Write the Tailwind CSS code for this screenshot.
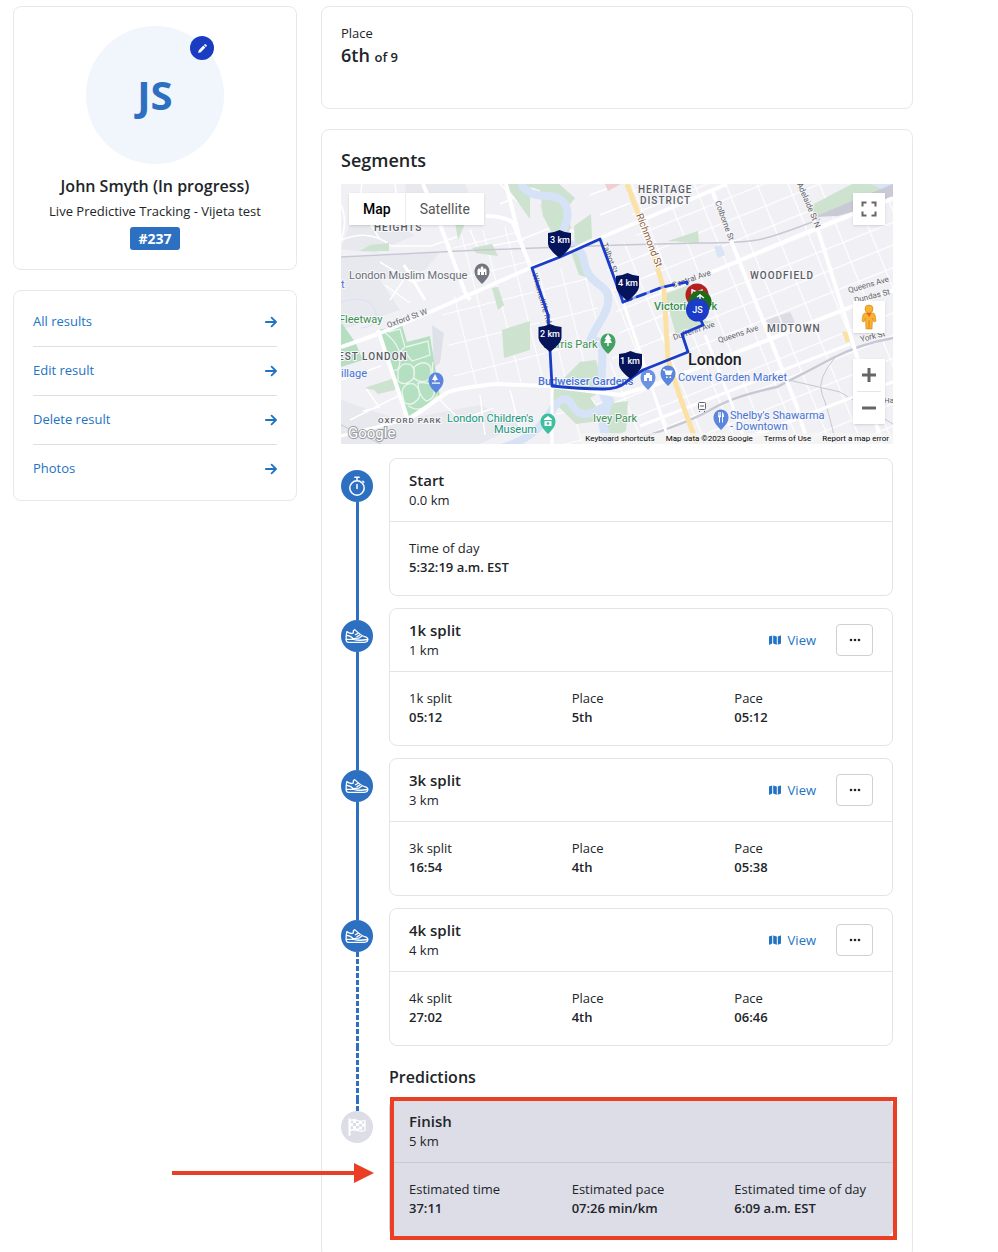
<!DOCTYPE html>
<html lang="en">
<head>
    <meta charset="UTF-8">
    <meta name="viewport" content="width=device-width, initial-scale=1.0">
    <title>John Smyth - Live Predictive Tracking</title>
    <script src="https://cdn.jsdelivr.net/npm/@tailwindcss/browser@4"></script>
</head>
<body class="bg-white font-['Open_Sans',sans-serif] text-[13px] text-[#212529]">

<!-- Shared icons -->
<svg class="hidden" aria-hidden="true">
    <symbol id="icon-arrow" viewBox="0 0 12 12">
        <path d="M0.8 6h10M6.600 1.600 11 6l-4.400 4.400" fill="none" stroke="currentColor" stroke-width="1.800" stroke-linecap="round" stroke-linejoin="round"/>
    </symbol>
    <symbol id="icon-map" viewBox="0 0 12 10">
        <path d="M0 2Q0 1.500.5 1.300L3.200.4v8.200L.5 9.700Q0 9.900 0 9.400zM4.200.4 7.800 1.500v8.200L4.200 8.600zM8.800 1.500 11.500.4q.5-.2.5.4v7.400q0 .4-.4.600L8.800 9.700z" fill="currentColor"/>
    </symbol>
    <symbol id="icon-shoe" viewBox="0 0 24 16">
        <g fill="none" stroke="currentColor" stroke-width="1.300" stroke-linecap="round" stroke-linejoin="round">
            <path d="M1.800 3.600C1.200 6.500 1 9.800 1.200 12c.1 1.600.9 2.300 2.400 2.300h15.800c2 0 3.400-1.200 3.400-3.200 0-1.600-1.400-2-3.200-2.500C16.400 7.800 13.400 5 9.600 1.600L8.400 2.800l-.2 2.400c-2 .6-4.400.2-6.400-1.600z"/>
            <path d="M1.300 11.400h7.500c3 1 8.800 1 13.800.1M1.600 7.400c3 .2 5 1.400 7 3.600M8.800 10.600l3.600-.4M10.400 6.800l2.600-1.400M12 8.600l2.800-1.600M13.600 10.200l3-2"/>
        </g>
    </symbol>
    <symbol id="icon-dots" viewBox="0 0 12 4">
        <g fill="currentColor"><circle cx="2" cy="2" r="1.300"/><circle cx="6" cy="2" r="1.300"/><circle cx="10" cy="2" r="1.300"/></g>
    </symbol>
</svg>

<div class="h-screen overflow-hidden">
<div class="grid max-w-[913px] grid-cols-[284px_minmax(0,1fr)] items-start gap-6 pt-[6px] pl-[13px]">

    <!-- Sidebar -->
    <aside class="flex flex-col gap-5">
        <section class="flex flex-col items-center rounded-lg border border-[#e8e8ea] px-5 py-[19px]">
            <div class="relative flex size-[138px] items-center justify-center rounded-full bg-[#f0f6fb]">
                <span class="text-[40px] leading-[40px] font-bold text-[#2d6fc1]">JS</span>
                <button type="button" aria-label="Edit photo" class="absolute top-[10px] right-[10px] flex size-6 items-center justify-center rounded-full bg-[#1a3cc0] text-white">
                    <svg class="size-[11px]" viewBox="0 0 11 11" fill="currentColor"><path d="M7.300 1.600q1.100-.9 2.100.1.900.9 0 1.900l-.5.5-2-2zM6.300 2.600l2.100 2L3.800 9.200 1.100 10 1.800 7.200z"/></svg>
                </button>
            </div>
            <h1 class="mt-[10px] text-base leading-6 font-semibold">John Smyth (In progress)</h1>
            <p class="mt-[3px] leading-5">Live Predictive Tracking - Vijeta test</p>
            <span class="mt-[6px] rounded-[3px] bg-[#2d6fc1] px-2 text-sm leading-[23px] font-bold text-white">#237</span>
        </section>

        <nav class="rounded-lg border border-[#e8e8ea] px-[19px] py-[7px] text-[#2273c3]">
            <a href="#" class="flex h-[49px] items-center justify-between border-b border-[#dddee6]">All results <svg class="size-3"><use href="#icon-arrow"/></svg></a>
            <a href="#" class="flex h-[49px] items-center justify-between border-b border-[#dddee6]">Edit result <svg class="size-3"><use href="#icon-arrow"/></svg></a>
            <a href="#" class="flex h-[49px] items-center justify-between border-b border-[#dddee6]">Delete result <svg class="size-3"><use href="#icon-arrow"/></svg></a>
            <a href="#" class="flex h-12 items-center justify-between">Photos <svg class="size-3"><use href="#icon-arrow"/></svg></a>
        </nav>
    </aside>

    <main class="flex flex-col gap-5">
        <section class="rounded-lg border border-[#e8e8ea] px-[19px] pt-4 pb-[39px]">
            <p class="leading-5">Place</p>
            <p class="text-lg leading-6 font-semibold">6th <span class="text-[13px]">of 9</span></p>
        </section>

        <section class="rounded-lg border border-[#e8e8ea] px-[19px] pt-5 pb-5">
            <h2 class="mb-[14px] text-lg leading-5 font-semibold">Segments</h2>

            <!-- Map -->
            <div class="relative mb-[14px] h-[260px] overflow-hidden font-[Roboto,sans-serif]">
                <svg class="h-full w-full" viewBox="341 184 552 260" preserveAspectRatio="xMidYMid slice" role="img" aria-label="Course map">
                    <defs>
                        <pattern id="blocks-east" width="29" height="21" patternUnits="userSpaceOnUse" patternTransform="translate(700 277) rotate(-22)">
                            <path d="M0 0h29M0 0v21" stroke="#fff" stroke-width="2.400"/>
                        </pattern>
                        <pattern id="blocks-west" width="22" height="31" patternUnits="userSpaceOnUse" patternTransform="translate(500 300) rotate(-14)">
                            <path d="M0 0h22M0 0v31" stroke="#fff" stroke-width="2"/>
                        </pattern>
                        <path id="pin" d="M0 13C-5 8-7.500 5-7.500 0a7.500 7.500 0 0 1 15 0C7.500 5 5 8 0 13z"/>
                        <path id="shield" d="M-11.500-9Q-5-9.500 0-12 5-9.500 11.500-9V2Q11 7.500 0 16-11 7.500-11.500 2z"/>
                    </defs>
                    <rect x="341" y="184" width="552" height="260" fill="#f0f0f5"/>
                    <!-- shaded districts -->
                    <g fill="#e7e9ee">
                        <path d="M341 258 440 252 425 270 380 280 400 310 341 330z"/>
                        <path d="M341 400 400 420 480 405 520 425 480 444H341z"/>
                        <path d="M405 184h60l12 26-30 12-38-6zM355 210l60 25-40 18-34-4z"/>
                        <path d="M540 205l14-5 5 12-14 7zM432 325l12 8-4 30-6 5z" fill="#dfe1e8"/>
                        <path d="M766 320l24-8 5 10-24 9z" fill="#dcdce4"/>
                    </g>
                    <!-- minor streets -->
                    <path d="M625 184H893V444H690L655 320z" fill="url(#blocks-east)"/>
                    <path d="M603 250 650 235 668 300 690 444H625L600 400 620 330z" fill="url(#blocks-east)"/>
                    <path d="M440 300 530 268 550 384 495 384 455 390z" fill="url(#blocks-west)"/>
                    <path d="M535 274 590 262 600 300 590 345 605 380 552 384z" fill="url(#blocks-west)"/>
                    <path d="M466 290 530 268 512 225 450 236zM555 400h50l20 20-5 24h-60z" fill="url(#blocks-west)"/>
                    <g fill="none" stroke="#fff" stroke-width="1.500">
                        <path d="M341 240q30-12 50 6h40l28-10M362 184l-3 22 20 32M395 184l5 35M341 205q8 18-2 40M380 262l32 20 40-8M390 300l20-30 25 8M385 285l25 18M500 184l20 20M470 230l8 18 46-8M350 420l60-30M365 387l14 20-16 4M440 400l20 20 34-12M480 395l5 40M510 390l10 40M545 184l-45 20M520 240l40-16 14 8M341 380l40-14M600 215l30-12M590 195l40-15"/>
                    </g>
                    <!-- parks -->
                    <g fill="#cde2cf">
                        <path d="M520 184h39l16 14-8 10 4 20-12 18-16-30-3-26z"/>
                        <path d="M505 184h25v35zM574 226l17-12 1 24-17 8zM571 252l14 2 4 24-10-3z"/>
                        <path d="M370 245l-10 6h29v-8zM455 222l6-14 3 18-6 14zM472 248l20-4 6 12-22-3zM492 288l6-1 6 18-6 5zM479 244l16-2z"/>
                        <path d="M812 205l40-21h36l-6 10-60 22-9 4zM668 241l30-10 1 12z"/>
                        <path d="M502 330l28-9v29l-26 8zM364 388l31-10v12l-17 4-4-4zM665 294l24-9 14 35 12 2-38 17z"/>
                        <path d="M554 388l26-26 16-2 8 30-14 8 16 22-30 4-24-24zM600 405l28-4-2 30-22 10zM520 365l8-4z"/>
                    </g>
                    <path d="M341 322 355 342 363 360 341 367zM378 330 402 325 407 342 430 336 440 397 407 417z" fill="#b4dfc1"/>
                    <g fill="none" stroke="#eaf6ec" stroke-width="1.300">
                        <path d="M384 332q16 12 16 26t-6 12M388 332l12-3 5 18q-10 8-6 14M406 347l22-6 2 14-18 6-8-10"/>
                        <path d="M398 371q4-10 13-6 6 6 2 14-8 8-15 2zM414 367q10-8 16-1 3 8-2 14-8 4-14-2zM402 392q2-10 12-8 7 5 5 14-8 10-15 4zM418 383q10-2 16 4 2 12-8 14-8-6-8-18zM408 406q14 8 24-5l6-6M433 362q-2 10 2 22"/>
                    </g>
                    <!-- river -->
                    <g fill="none" stroke="#d6e2f6" stroke-linejoin="round" stroke-linecap="round">
                        <path d="M522 186q8 10 24 10t20 10-2 22 6 16 14 18 17 24-1 36-6 20 8 26 6 32-10 10-26-5-22 8-40 32-30 12" stroke-width="8"/>
                        <path d="M608 400l-5 24 4 20" stroke-width="9"/>
                        <path d="M341 302q28-8 34 8t-14 18" stroke-width="1"/>
                    </g>
                    <path d="M870 184h23v10zM714 247l7-2 4 10-7 3z" fill="#d9e4f7"/>
                    <path d="M605 184h16l-13 7z" fill="#f0cfd2"/>
                    <!-- railways -->
                    <path d="M814 217 893 184V200L838 216z" fill="#c9cad6"/>
                    <g fill="none" stroke="#c7c8d3" stroke-width="1.400">
                        <path d="M341 257 480 250 620 245 700 243Q745 243 762 239T820 219"/>
                        <path d="M640 438Q690 422 712 409T777 387L833 358Q860 344 893 338" stroke-width="2.400"/>
                        <path d="M836 356q-20 24-14 38t14 50M780 378l60 14 53 32" stroke-width="1"/>
                        <path d="M341 425l40 19" stroke-width="1"/>
                    </g>
                    <!-- main roads -->
                    <g fill="none" stroke="#fff" stroke-width="4" stroke-linejoin="round">
                        <path d="M341 347 378 334 430 312 530 268 600 238 727 184"/>
                        <path d="M423 184 441 227 465 292 470 300M486 216Q505 216 513 223L531 268M506 184 520 240 531 268"/>
                        <path d="M378 330 408 420 445 394Q450 389 495 384L550 386 620 395 653 385 710 363 893 290"/>
                        <path d="M552 386V444M341 436 408 419M404 265 425 300M600 238 623 302 648 375 670 444" stroke-width="3"/>
                        <path d="M700 277 817 228 893 198M660 292 700 277"/>
                        <path d="M712 190 732 243 760 313 797 407 808 444M800 184 817 227 843 310 857 357 882 444"/>
                        <path d="M705 335 733 407 746 444M640 426 850 344M740 440 893 382" stroke-width="3"/>
                    </g>
                    <path d="M627 184 653 253 664 290 668 360 680 397 697 444" fill="none" stroke="#fbe2a4" stroke-width="5"/>
                    <path d="M842 332l5-1 3 10-4 2z" fill="#fbe2a4"/>

                    <!-- street names -->
                    <g fill="#5f6368" stroke="#f5f5f8" stroke-width="2" paint-order="stroke" class="text-[8px]">
                        <text transform="translate(388 328) rotate(-20)">Oxford St W</text>
                        <text transform="translate(715 202) rotate(70)">Colborne St</text>
                        <text transform="translate(797 184) rotate(67)">Adelaide St N</text>
                        <text transform="translate(673 288) rotate(-19)">Central Ave</text>
                        <text transform="translate(674 340) rotate(-18)">Dufferin Ave</text>
                        <text transform="translate(719 343) rotate(-18)">Queens Ave</text>
                        <text transform="translate(849 293) rotate(-16)">Queens Ave</text>
                        <text transform="translate(855 303) rotate(-14)">Dundas St</text>
                        <text transform="translate(861 342) rotate(-14)">York St</text>
                        <text x="884" y="403">Ha</text>
                        <text transform="translate(532 274) rotate(74)">Wharncliffe Rd</text>
                        <text transform="translate(602 244) rotate(70)">Talbot St</text>
                    </g>
                    <text transform="translate(636 215) rotate(69)" fill="#8a5a3c" stroke="#fff" stroke-width="2" paint-order="stroke" class="text-[10px]">Richmond St</text>
                    <!-- places -->
                    <g stroke="#f7f7fa" stroke-width="2" paint-order="stroke" class="text-[11px]">
                        <g fill="#5a5e64" class="text-[10px] font-medium tracking-widest">
                            <text x="374" y="231">HEIGHTS</text>
                            <text x="638" y="193">HERITAGE</text>
                            <text x="640" y="204">DISTRICT</text>
                            <text x="750" y="279">WOODFIELD</text>
                            <text x="767" y="332">MIDTOWN</text>
                            <text x="338" y="360">EST LONDON</text>
                            <text x="378" y="423" class="text-[8px]">OXFORD PARK</text>
                        </g>
                        <text x="349" y="279" fill="#6b6f76">London Muslim Mosque</text>
                        <g fill="#3b9150">
                            <text x="339" y="323">Fleetway</text>
                            <text x="543" y="348">Harris Park</text>
                            <text x="593" y="422">Ivey Park</text>
                            <text x="654" y="310" class="font-medium">Victoria Park</text>
                        </g>
                        <g fill="#18977b">
                            <text x="447" y="422">London Children's</text>
                            <text x="494" y="433">Museum</text>
                        </g>
                        <g fill="#4673d2">
                            <text x="341" y="377">illage</text>
                            <text x="341" y="288">t</text>
                            <text x="538" y="385" class="font-medium">Budweiser Gardens</text>
                            <text x="678" y="381">Covent Garden Market</text>
                            <text x="730" y="419">Shelby's Shawarma</text>
                            <text x="730" y="430">- Downtown</text>
                        </g>
                        <text x="688" y="365" fill="#202124" class="text-base font-medium">London</text>
                    </g>
                    <!-- place pins -->
                    <use href="#pin" x="482" y="271" fill="#717680"/>
                    <use href="#pin" x="436" y="380" fill="#5b86dd"/>
                    <use href="#pin" x="608" y="341" fill="#45a163"/>
                    <use href="#pin" x="648" y="377" fill="#6b93e2"/>
                    <use href="#pin" x="668" y="373" fill="#5b86dd"/>
                    <use href="#pin" x="721" y="417" fill="#5b86dd"/>
                    <use href="#pin" x="548" y="421" fill="#3bbf9d"/>
                    <g fill="#fff">
                        <path d="M477.500 275v-5l1.500-2 1.500 2v-2l1.500-2 1.500 2v2l1.500-2 1.500 2v5h-1.500v-3h-1v3h-3v-3h-1v3z"/>
                        <path d="M435 374l3 6h-2.400v1.600h-1.200V380H432zM432 382.500h8v1.200h-8z"/>
                        <path d="M608 334l3.500 5h-1.500l2 4h-3.300v3h-1.400v-3H604l2-4h-1.500z"/>
                        <path d="M644 381v-6h2v-2h4v2h2v6h-3v-3h-2v3z"/>
                        <path d="M663 369h2l.8 1.500h7L671 375h-5.200L664.500 370.500H663zM666 376.500h1.600v1.600H666zM669.500 376.500h1.600v1.600h-1.600z"/>
                        <path d="M718 412v4q0 1.500 1 1.500v5h1v-5q1 0 1-1.500v-4h-.7v3.500h-.5V412h-.6v3.500h-.5V412zM722 412q2 1 2 5h-1v5.500h-1z"/>
                        <path d="M544 419l4-3 4 3v1h-8zM544.500 421h7v5h-7z"/>
                    </g>
                    <circle cx="548" cy="423.500" r="1.300" fill="#3bbf9d"/>
                    <g fill="#fff" stroke="#5f6368"><rect x="698.500" y="402.500" width="7" height="7" rx="1"/><path d="M700 406h4M700 411l-1 1M704 411l1 1"/></g>

                    <!-- course -->
                    <g fill="none" stroke="#1a3cc8" stroke-width="2.800" stroke-linejoin="round" stroke-linecap="round">
                        <path d="M700 318 703 325 682 334 688 352 643 370Q632 377 625 383T603 389Q580 389 552 386L550 350 548 315 532 268 560 257 600 239 623 302"/>
                        <path d="M623 302 663 287" stroke="#8aa9ec"/>
                        <path d="M623 302 663 287 687 282 688 288" stroke-dasharray="9 6"/>
                    </g>
                    <g fill="#06145c">
                        <use href="#shield" x="559.500" y="242"/>
                        <use href="#shield" x="550" y="336"/>
                        <use href="#shield" x="630.500" y="363"/>
                        <use href="#shield" x="627.500" y="285"/>
                    </g>
                    <g fill="#fff" text-anchor="middle" class="text-[9px] font-medium">
                        <text x="560" y="243">3 km</text>
                        <text x="550" y="337">2 km</text>
                        <text x="630" y="364">1 km</text>
                        <text x="628" y="286">4 km</text>
                    </g>
                    <circle cx="697" cy="295" r="11.500" fill="#b3201f"/>
                    <path d="M692 289v8M692 290l5 2 5-2v5l-5 1" stroke="#fff" stroke-width="1.400" fill="none"/>
                    <circle cx="700" cy="302" r="11.500" fill="#1f6b1c"/>
                    <path d="M700 294v5M697 297l3-2 4 3" stroke="#fff" stroke-width="1.400" fill="none"/>
                    <circle cx="697.500" cy="310" r="11.500" fill="#1a3cc8"/>
                    <text x="697.500" y="313" fill="#fff" text-anchor="middle" class="text-[9px] font-medium">JS</text>

                    <text x="348" y="438" fill="#fff" stroke="#9a9ca1" stroke-width="2" paint-order="stroke" class="text-[15px]">Google</text>
                </svg>

                <div class="absolute top-[9px] left-2 flex h-8 bg-white text-sm shadow">
                    <button type="button" class="border-r border-[#ededed] px-[14px] font-medium text-black">Map</button>
                    <button type="button" class="px-[14px] text-[#565656]">Satellite</button>
                </div>
                <button type="button" aria-label="Toggle fullscreen view" class="absolute top-[9px] right-2 flex size-8 items-center justify-center bg-white text-[#666] shadow">
                    <svg class="size-4" viewBox="0 0 16 16" fill="none" stroke="currentColor" stroke-width="2"><path d="M1.500 5.500v-4h4M10.500 1.500h4v4M14.500 10.500v4h-4M5.500 14.500h-4v-4"/></svg>
                </button>
                <button type="button" aria-label="Street View" class="absolute top-[117px] right-2 flex size-8 items-center justify-center bg-white shadow">
                    <svg class="h-[26px] w-4" viewBox="0 0 16 26">
                        <path d="M4.500 9h7q2 0 2.500 2l1 6-2 1-1.500-4-.5 11H5l-.5-11L3 18l-2-1 1-6q.5-2 2.500-2z" fill="#fbb130" stroke="#d98a1c" stroke-width=".7"/>
                        <path d="M5.500 9 8 13l2.500-4z" fill="#e8622c"/>
                        <path d="M8 16v9" stroke="#d98a1c"/>
                        <circle cx="8" cy="5" r="4" fill="#fbb130" stroke="#d98a1c" stroke-width=".7"/>
                    </svg>
                </button>
                <div class="absolute right-2 bottom-[20px] flex w-8 flex-col items-center bg-white text-[#666] shadow">
                    <button type="button" aria-label="Zoom in" class="flex h-8 w-8 items-center justify-center"><svg class="size-[14px]" viewBox="0 0 14 14"><path d="M7 0v14M0 7h14" stroke="currentColor" stroke-width="3"/></svg></button>
                    <span class="h-px w-6 bg-[#e6e6e6]"></span>
                    <button type="button" aria-label="Zoom out" class="flex h-8 w-8 items-center justify-center"><svg class="size-[14px]" viewBox="0 0 14 14"><path d="M0 7h14" stroke="currentColor" stroke-width="3"/></svg></button>
                </div>
                <div class="absolute right-0 bottom-0 flex gap-[11px] bg-[#f5f5f5]/70 px-1 text-[8px] leading-[11px] text-black">
                    <button type="button">Keyboard shortcuts</button>
                    <span>Map data ©2023 Google</span>
                    <a href="#">Terms of Use</a>
                    <a href="#">Report a map error</a>
                </div>
            </div>

            <!-- Timeline -->
            <ol>
                <li class="flex gap-4">
                    <div class="flex w-8 flex-col items-center pt-3">
                        <span class="flex size-8 shrink-0 items-center justify-center rounded-full bg-[#2d6fc1] text-white">
                            <svg class="size-5" viewBox="0 0 20 20" fill="none" stroke="currentColor" stroke-width="1.500" stroke-linecap="round"><circle cx="10" cy="12" r="7.200"/><path d="M10 8.500v4M10 1.500v3M7.800 1.200h4.400M15.800 5.200l1 1"/></svg>
                        </span>
                        <span class="w-[3px] flex-1 bg-[#2d6fc1]"></span>
                    </div>
                    <div class="mb-3 flex-1 rounded-lg border border-[#e3e4e6]">
                        <div class="border-b border-[#e3e4e6] px-[19px] py-[11px] leading-5">
                            <h3 class="text-[15px] leading-5 font-semibold">Start</h3>
                            <p>0.0 km</p>
                        </div>
                        <dl class="grid grid-cols-3 gap-6 px-[19px] pt-[17px] pb-[18px] leading-[19px]">
                            <div><dt>Time of day</dt><dd class="font-semibold">5:32:19 a.m. EST</dd></div>
                        </dl>
                    </div>
                </li>

                <li class="flex gap-4">
                    <div class="flex w-8 flex-col items-center">
                        <span class="h-3 w-[3px] bg-[#2d6fc1]"></span>
                        <span class="flex size-8 shrink-0 items-center justify-center rounded-full bg-[#2d6fc1] text-white"><svg class="h-4 w-6"><use href="#icon-shoe"/></svg></span>
                        <span class="w-[3px] flex-1 bg-[#2d6fc1]"></span>
                    </div>
                    <div class="mb-3 flex-1 rounded-lg border border-[#e3e4e6]">
                        <div class="flex items-center border-b border-[#e3e4e6] px-[19px] py-[11px] leading-5">
                            <div class="flex-1">
                                <h3 class="text-[15px] leading-5 font-semibold">1k split</h3>
                                <p>1 km</p>
                            </div>
                            <a href="#" class="flex items-center gap-[7px] text-[#2273c3]"><svg class="h-[10px] w-3"><use href="#icon-map"/></svg>View</a>
                            <button type="button" aria-label="More options" class="ml-5 flex h-8 w-[37px] items-center justify-center rounded border border-[#ced0d4]"><svg class="h-1 w-3"><use href="#icon-dots"/></svg></button>
                        </div>
                        <dl class="grid grid-cols-3 gap-6 px-[19px] pt-[17px] pb-[18px] leading-[19px]">
                            <div><dt>1k split</dt><dd class="font-semibold">05:12</dd></div>
                            <div><dt>Place</dt><dd class="font-semibold">5th</dd></div>
                            <div><dt>Pace</dt><dd class="font-semibold">05:12</dd></div>
                        </dl>
                    </div>
                </li>

                <li class="flex gap-4">
                    <div class="flex w-8 flex-col items-center">
                        <span class="h-3 w-[3px] bg-[#2d6fc1]"></span>
                        <span class="flex size-8 shrink-0 items-center justify-center rounded-full bg-[#2d6fc1] text-white"><svg class="h-4 w-6"><use href="#icon-shoe"/></svg></span>
                        <span class="w-[3px] flex-1 bg-[#2d6fc1]"></span>
                    </div>
                    <div class="mb-3 flex-1 rounded-lg border border-[#e3e4e6]">
                        <div class="flex items-center border-b border-[#e3e4e6] px-[19px] py-[11px] leading-5">
                            <div class="flex-1">
                                <h3 class="text-[15px] leading-5 font-semibold">3k split</h3>
                                <p>3 km</p>
                            </div>
                            <a href="#" class="flex items-center gap-[7px] text-[#2273c3]"><svg class="h-[10px] w-3"><use href="#icon-map"/></svg>View</a>
                            <button type="button" aria-label="More options" class="ml-5 flex h-8 w-[37px] items-center justify-center rounded border border-[#ced0d4]"><svg class="h-1 w-3"><use href="#icon-dots"/></svg></button>
                        </div>
                        <dl class="grid grid-cols-3 gap-6 px-[19px] pt-[17px] pb-[18px] leading-[19px]">
                            <div><dt>3k split</dt><dd class="font-semibold">16:54</dd></div>
                            <div><dt>Place</dt><dd class="font-semibold">4th</dd></div>
                            <div><dt>Pace</dt><dd class="font-semibold">05:38</dd></div>
                        </dl>
                    </div>
                </li>

                <li class="flex gap-4">
                    <div class="flex w-8 flex-col items-center">
                        <span class="h-3 w-[3px] bg-[#2d6fc1]"></span>
                        <span class="flex size-8 shrink-0 items-center justify-center rounded-full bg-[#2d6fc1] text-white"><svg class="h-4 w-6"><use href="#icon-shoe"/></svg></span>
                        <span class="w-[3px] flex-1 bg-[repeating-linear-gradient(#2d6fc1_0_5px,transparent_5px_7px)]"></span>
                    </div>
                    <div class="flex-1 rounded-lg border border-[#e3e4e6]">
                        <div class="flex items-center border-b border-[#e3e4e6] px-[19px] py-[11px] leading-5">
                            <div class="flex-1">
                                <h3 class="text-[15px] leading-5 font-semibold">4k split</h3>
                                <p>4 km</p>
                            </div>
                            <a href="#" class="flex items-center gap-[7px] text-[#2273c3]"><svg class="h-[10px] w-3"><use href="#icon-map"/></svg>View</a>
                            <button type="button" aria-label="More options" class="ml-5 flex h-8 w-[37px] items-center justify-center rounded border border-[#ced0d4]"><svg class="h-1 w-3"><use href="#icon-dots"/></svg></button>
                        </div>
                        <dl class="grid grid-cols-3 gap-6 px-[19px] pt-[17px] pb-[18px] leading-[19px]">
                            <div><dt>4k split</dt><dd class="font-semibold">27:02</dd></div>
                            <div><dt>Place</dt><dd class="font-semibold">4th</dd></div>
                            <div><dt>Pace</dt><dd class="font-semibold">06:46</dd></div>
                        </dl>
                    </div>
                </li>

                <li class="flex gap-4">
                    <div class="flex w-8 justify-center">
                        <span class="w-[3px] bg-[repeating-linear-gradient(#2d6fc1_0_5px,transparent_5px_7px)]"></span>
                    </div>
                    <h2 class="pt-[19px] pb-[10px] text-base leading-6 font-semibold">Predictions</h2>
                </li>

                <li class="relative flex gap-4">
                    <div class="flex w-8 flex-col items-center">
                        <span class="h-3 w-[3px] bg-[repeating-linear-gradient(#2d6fc1_0_5px,transparent_5px_7px)]"></span>
                        <span class="flex size-8 shrink-0 items-center justify-center rounded-full bg-[#dcdde6] text-white">
                            <svg class="size-[18px]" viewBox="0 0 18 18">
                                <path d="M1.500 1v16" stroke="currentColor" stroke-width="2" stroke-linecap="round"/>
                                <path d="M2 2.500q4-1.500 7.500 0t7.500 0v10q-4 1.500-7.500 0T2 12.500z" fill="none" stroke="currentColor" stroke-width="1.300"/>
                                <path d="M5 2h3v3H5zM11 3h3v3h-3zM8 5h3v3H8zM14 5.500h3v3h-3zM2.500 5h2.500v3H2.500zM5 8h3v3H5zM11 8.500h3v3h-3zM8 10.500h3V13H8z" fill="currentColor"/>
                            </svg>
                        </span>
                    </div>
                    <div class="relative flex-1">
                        <div class="rounded-lg border border-[#d2d3db] bg-[#dcdde6]">
                            <div class="border-b border-[#c8c9d3] px-[19px] py-[11px] leading-5">
                                <h3 class="text-[15px] leading-5 font-semibold">Finish</h3>
                                <p>5 km</p>
                            </div>
                            <dl class="grid grid-cols-3 gap-6 px-[19px] pt-[17px] pb-[18px] leading-[19px]">
                                <div><dt>Estimated time</dt><dd class="font-semibold">37:11</dd></div>
                                <div><dt>Estimated pace</dt><dd class="font-semibold">07:26 min/km</dd></div>
                                <div><dt class="whitespace-nowrap">Estimated time of day</dt><dd class="font-semibold">6:09 a.m. EST</dd></div>
                            </dl>
                        </div>
                        <!-- highlight frame -->
                        <span class="pointer-events-none absolute -top-[2px] -right-1 -bottom-[3px] left-px border-4 border-[#eb3f25]"></span>
                    </div>
                    <!-- callout arrow -->
                    <svg class="pointer-events-none absolute top-16 -left-[169px] h-5 w-[202px]" viewBox="0 0 202 20" fill="#eb3f25" aria-hidden="true"><path d="M0 8h182V0l20 10-20 10v-8H0z"/></svg>
                </li>
            </ol>
        </section>
    </main>
</div>
</div>

</body>
</html>
